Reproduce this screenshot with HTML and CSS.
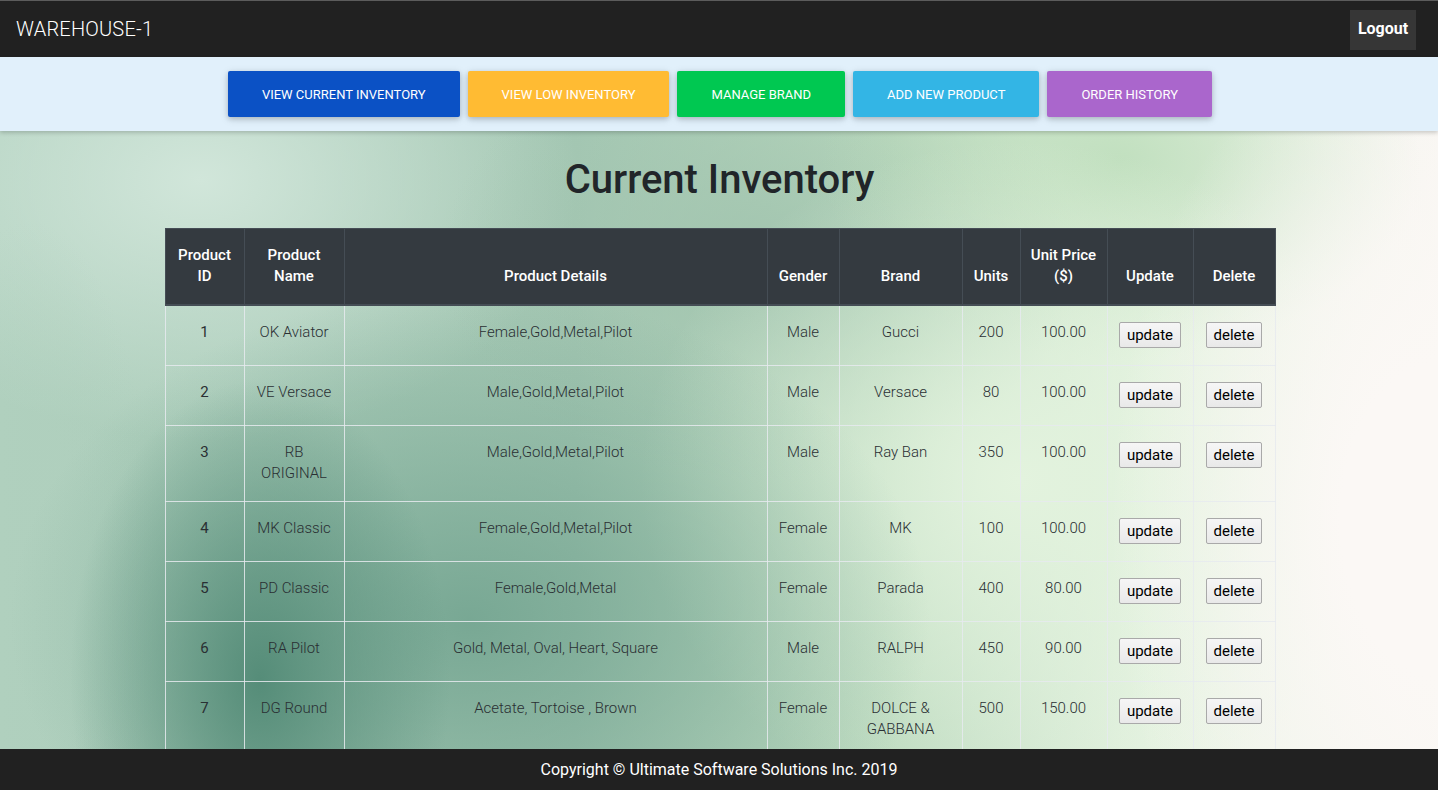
FILE: index.html
```html
<!DOCTYPE html>
<html lang="en">
<head>
<meta charset="utf-8">
<title>Warehouse-1</title>
<link rel="stylesheet" href="styles.css">
</head>
<body>
<header class="navbar">
  <div class="brand">WAREHOUSE-1</div>
  <button class="logout">Logout</button>
</header>
<nav class="actions">
  <a class="btn btn-blue">View Current Inventory</a>
  <a class="btn btn-yellow">View Low Inventory</a>
  <a class="btn btn-green">Manage Brand</a>
  <a class="btn btn-cyan">Add New Product</a>
  <a class="btn btn-purple">Order History</a>
</nav>
<main class="container">
  <h1 class="title">Current Inventory</h1>
  <table class="inv">
    <colgroup>
      <col class="c-id"><col class="c-name"><col class="c-details"><col class="c-gender"><col class="c-brand"><col class="c-units"><col class="c-price"><col class="c-upd"><col class="c-del">
    </colgroup>
    <thead>
      <tr>
        <th>Product<br>ID</th><th>Product<br>Name</th><th>Product Details</th><th>Gender</th><th>Brand</th><th>Units</th><th>Unit Price<br>($)</th><th>Update</th><th>Delete</th>
      </tr>
    </thead>
    <tbody>
      <tr><td class="id">1</td><td>OK Aviator</td><td>Female,Gold,Metal,Pilot</td><td>Male</td><td>Gucci</td><td>200</td><td>100.00</td><td><button class="rowbtn">update</button></td><td><button class="rowbtn">delete</button></td></tr>
      <tr><td class="id">2</td><td>VE Versace</td><td>Male,Gold,Metal,Pilot</td><td>Male</td><td>Versace</td><td>80</td><td>100.00</td><td><button class="rowbtn">update</button></td><td><button class="rowbtn">delete</button></td></tr>
      <tr><td class="id">3</td><td>RB<br>ORIGINAL</td><td>Male,Gold,Metal,Pilot</td><td>Male</td><td>Ray Ban</td><td>350</td><td>100.00</td><td><button class="rowbtn">update</button></td><td><button class="rowbtn">delete</button></td></tr>
      <tr><td class="id">4</td><td>MK Classic</td><td>Female,Gold,Metal,Pilot</td><td>Female</td><td>MK</td><td>100</td><td>100.00</td><td><button class="rowbtn">update</button></td><td><button class="rowbtn">delete</button></td></tr>
      <tr><td class="id">5</td><td>PD Classic</td><td>Female,Gold,Metal</td><td>Female</td><td>Parada</td><td>400</td><td>80.00</td><td><button class="rowbtn">update</button></td><td><button class="rowbtn">delete</button></td></tr>
      <tr><td class="id">6</td><td>RA Pilot</td><td>Gold, Metal, Oval, Heart, Square</td><td>Male</td><td>RALPH</td><td>450</td><td>90.00</td><td><button class="rowbtn">update</button></td><td><button class="rowbtn">delete</button></td></tr>
      <tr><td class="id">7</td><td>DG Round</td><td>Acetate, Tortoise , Brown</td><td>Female</td><td>DOLCE &amp;<br>GABBANA</td><td>500</td><td>150.00</td><td><button class="rowbtn">update</button></td><td><button class="rowbtn">delete</button></td></tr>
    </tbody>
  </table>
</main>
<footer class="footer">Copyright © Ultimate Software Solutions Inc. 2019</footer>
</body>
</html>
```

FILE: styles.css
```css
html {
  min-height: 100%;
  background-color: #b8d6c4;
  background-image:
    radial-gradient(ellipse 190px 300px at 260px 680px, rgba(82,138,118,0.95), rgba(82,138,118,0)),
    radial-gradient(ellipse 460px 330px at 470px 620px, rgba(112,162,142,0.85), rgba(112,162,142,0)),
    radial-gradient(ellipse 130px 380px at 30px 600px, rgba(176,208,190,0.9), rgba(176,208,190,0)),
    radial-gradient(ellipse 330px 520px at 1440px 520px, #fbf8f5 30%, rgba(251,248,245,0)),
    radial-gradient(ellipse 380px 340px at 1020px 480px, #e3f3de, rgba(227,243,222,0)),
    radial-gradient(ellipse 300px 200px at 1120px 160px, rgba(190,222,188,0.9), rgba(190,222,188,0)),
    radial-gradient(ellipse 320px 220px at 760px 260px, rgba(160,195,174,0.9), rgba(160,195,174,0)),
    radial-gradient(ellipse 380px 260px at 200px 180px, #d1e6da, rgba(209,230,218,0)),
    linear-gradient(90deg, #b0d0be 0%, #a4c7b3 40%, #bcdabf 62%, #e4f2e0 80%, #f8f6f2 100%);
  background-attachment: fixed;
}

body {
  margin: 0;
  font-family: Roboto, "Liberation Sans", Arial, sans-serif;
  color: #212529;
  padding-bottom: 41px;
}

.navbar {
  height: 56px;
  border-top: 1px solid #5c5c5c;
  background: #212121;
  display: flex;
  align-items: center;
  justify-content: space-between;
  padding: 0 22px 0 16px;
}

.brand {
  color: #fff;
  font-size: 20px;
  font-weight: 300;
  letter-spacing: 0.2px;
}

.logout {
  background: #363636;
  color: #fff;
  border: 0;
  font-family: Roboto, "Liberation Sans", Arial, sans-serif;
  font-size: 16px;
  font-weight: 700;
  height: 40px;
  width: 66px;
  padding: 0 0 2px;
  margin-top: 1px;
}

.actions {
  background: #e1f0fb;
  height: 74px;
  display: flex;
  justify-content: center;
  align-items: center;
  gap: 8px;
  box-shadow: 0 2px 4px rgba(0, 0, 0, 0.18);
  position: relative;
  z-index: 1;
  padding-left: 2px;
}

.btn {
  display: block;
  color: #fff;
  font-size: 13px;
  line-height: 19px;
  text-transform: uppercase;
  padding: 13.5px 34px;
  border-radius: 2px;
  box-shadow: 0 2px 5px 0 rgba(0, 0, 0, 0.16), 0 2px 10px 0 rgba(0, 0, 0, 0.12);
  white-space: nowrap;
}

.btn-blue { background: #0b51c5; }
.btn-yellow { background: #ffbb33; }
.btn-green { background: #00c851; }
.btn-cyan { background: #33b5e5; }
.btn-purple { background: #aa66cc; }

.container {
  width: 1110px;
  margin: 0 auto;
  padding-left: 1px;
}

.title {
  margin: 25px 0 24px;
  text-align: center;
  font-size: 40px;
  font-weight: 500;
  line-height: 48px;
  color: #212529;
}

.inv {
  width: 1110px;
  border-collapse: collapse;
  table-layout: fixed;
  font-size: 15px;
  line-height: 21px;
}

.c-id { width: 79px; }
.c-name { width: 100px; }
.c-details { width: 423px; }
.c-gender { width: 72px; }
.c-brand { width: 123px; }
.c-units { width: 58px; }
.c-price { width: 87px; }
.c-upd { width: 86px; }
.c-del { width: 82px; }

.inv th {
  background: #343a40;
  color: #fff;
  font-weight: 500;
  vertical-align: bottom;
  text-align: center;
  padding: 16px 4px 17px;
  border: 1px solid #454d55;
  border-bottom: 2px solid #454d55;
}

.inv td {
  text-align: center;
  vertical-align: top;
  padding: 16px 4px 17px;
  border: 1px solid rgba(230, 234, 238, 0.85);
  font-weight: 300;
  color: #2a2f33;
}

.inv td.id {
  font-weight: 400;
}

.rowbtn {
  font-family: Roboto, "Liberation Sans", Arial, sans-serif;
  font-size: 15px;
  height: 26px;
  padding: 0 7px;
  color: #000;
  background: linear-gradient(#f6f6f6, #e9e9e9);
  border: 1px solid #a9a9a9;
  border-radius: 2px;
  vertical-align: top;
}

.footer {
  position: fixed;
  left: 0;
  right: 0;
  bottom: 0;
  height: 41px;
  background: #212121;
  color: #fff;
  font-size: 16px;
  display: flex;
  align-items: center;
  justify-content: center;
  z-index: 2;
}
```
